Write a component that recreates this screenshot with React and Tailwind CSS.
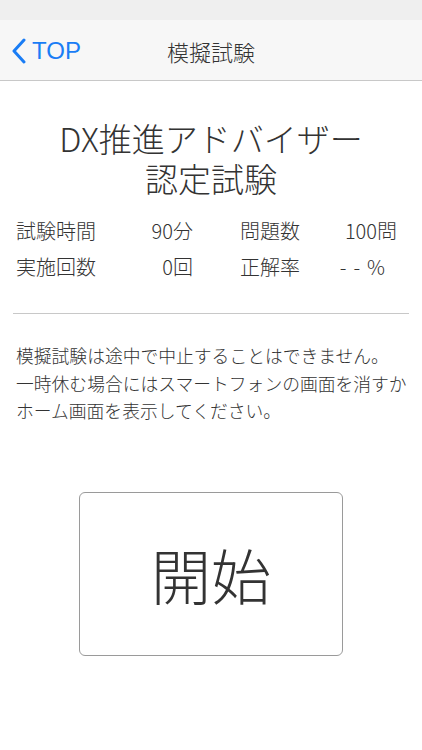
export default function App() {
  const font = { fontFamily: '"Noto Sans CJK JP", "Noto Sans", sans-serif' };
  return (
    <div className="w-[422px] h-[750px] bg-white text-[#333333] font-light overflow-hidden" style={font}>
      {/* status bar */}
      <div className="h-5 bg-[#efefef]" />

      {/* nav bar */}
      <div className="relative h-[61px] bg-[#f7f7f7] border-b border-[#c8c8c8] flex items-center justify-center">
        <div className="absolute left-[11px] top-0 h-full flex items-center pt-[2px] text-[#1a7df5]">
          <svg width="16" height="26" viewBox="0 0 16 26" fill="none">
            <path d="M13 2 L3 13 L13 24" stroke="currentColor" strokeWidth="3" strokeLinecap="round" strokeLinejoin="round" />
          </svg>
          <span className="ml-[5px] text-[24px] leading-none" style={{ fontFamily: '"Liberation Sans", sans-serif' }}>TOP</span>
        </div>
        <h1 className="text-[22px] leading-none pt-[1px]">模擬試験</h1>
      </div>

      {/* title */}
      <div className="pt-[37px] text-center text-[33px] leading-[40px]">
        <p>DX推進アドバイザー</p>
        <p>認定試験</p>
      </div>

      {/* stats */}
      <div className="mt-[15px] px-4 text-[20px] leading-[36px]">
        <div className="flex">
          <div className="w-[177px] flex justify-between">
            <span>試験時間</span>
            <span>90分</span>
          </div>
          <div className="ml-[47px] w-[157px] flex justify-between">
            <span>問題数</span>
            <span>100問</span>
          </div>
        </div>
        <div className="flex">
          <div className="w-[177px] flex justify-between">
            <span>実施回数</span>
            <span>0回</span>
          </div>
          <div className="ml-[47px] w-[157px] flex justify-between">
            <span>正解率</span>
            <span className="pr-[5px] tracking-[7px]">--%</span>
          </div>
        </div>
      </div>

      <div className="mt-[28px] mx-[13px] h-px bg-[#c8c8c8]" />

      {/* notice */}
      <div className="mt-[28px] px-4 text-[17.8px] leading-[27.5px] whitespace-nowrap">
        <p>模擬試験は途中で中止することはできません。</p>
        <p>一時休む場合にはスマートフォンの画面を消すか</p>
        <p>ホーム画面を表示してください。</p>
      </div>

      {/* start button */}
      <div className="mt-[67px] flex justify-center">
        <button className="w-[264px] h-[164px] border border-[#9a9a9a] rounded-[6px] bg-white text-[60px] font-light leading-none text-[#333333]" style={font}>
          開始
        </button>
      </div>
    </div>
  );
}
